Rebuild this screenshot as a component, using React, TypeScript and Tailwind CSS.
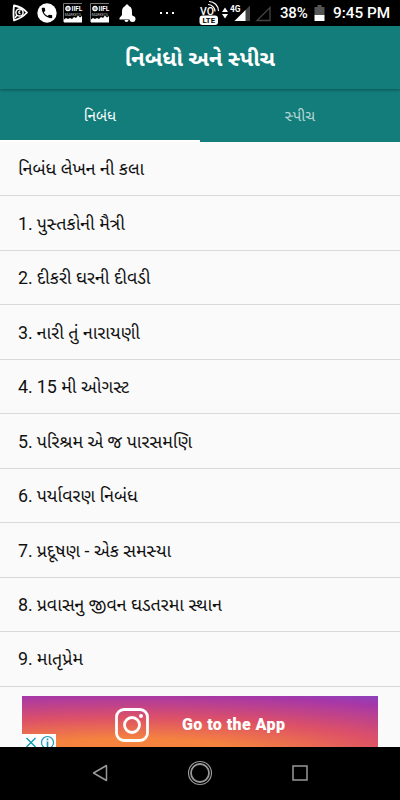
import { clsx } from 'clsx';

const tabs = ['નિબંધ', 'સ્પીચ'];

const essays = [
  { title: 'નિબંધ લેખન ની કલા' },
  { no: '1.', title: 'પુસ્તકોની મૈત્રી' },
  { no: '2.', title: 'દીકરી ઘરની દીવડી' },
  { no: '3.', title: 'નારી તું નારાયણી' },
  { no: '4.', title: '15 મી ઓગસ્ટ' },
  { no: '5.', title: 'પરિશ્રમ એ જ પારસમણિ' },
  { no: '6.', title: 'પર્યાવરણ નિબંધ' },
  { no: '7.', title: 'પ્રદૂષણ - એક સમસ્યા' },
  { no: '8.', title: 'પ્રવાસનુ જીવન ઘડતરમા સ્થાન' },
  { no: '9.', title: 'માતૃપ્રેમ' },
];

function MarketsIcon() {
  return (
    <svg viewBox="0 0 20 20" className="h-5 w-5 shrink-0 overflow-visible">
      <path d="M.5 19V.5h18.5" fill="none" stroke="#777" />
      <circle cx="5" cy="5.5" r="2.2" fill="#888" stroke="#fff" strokeWidth="1.2" />
      <text x="8.5" y="8" fontSize="6.5" fontWeight="700" fill="#fff">IIFL</text>
      <text x="1.8" y="12.8" fontSize="3.6" fill="#bbb">MARKETS</text>
      <path d="M1 19.5v-3l2-1.5 2 1 2-1 2 1 2-2 2 1 2-2.5 2 2 2-1.5v6.5z" fill="#fff" />
    </svg>
  );
}

function StatusBar() {
  return (
    <div className="flex h-[26px] shrink-0 items-center justify-between bg-black pr-[9px] pl-3 text-white">
      <div className="flex items-center">
        <svg viewBox="0 0 16 18" className="h-[18px] w-4">
          <path d="M2 1.5 Q1 9 2 16.5 Q10 14 15 8.5 Q10 3 2 1.5z" fill="none" stroke="#fff" strokeWidth="1.8" strokeLinejoin="round" />
          <circle cx="7.5" cy="8.5" r="3.6" fill="none" stroke="#fff" strokeWidth="1.5" />
          <path d="M8.5 7a1.3 1.3 0 1 0 0 2.5M5 11l-2 3" fill="none" stroke="#fff" strokeWidth="1.4" />
        </svg>
        <svg viewBox="0 0 20 20" className="ml-[9px] h-5 w-5">
          <circle cx="10" cy="10" r="9.7" fill="#fff" />
          <path transform="translate(3 3) scale(.58)" fill="#000" d="M6.6 10.8c1.4 2.8 3.8 5.1 6.6 6.6l2.2-2.2c.3-.3.7-.4 1-.2 1.1.4 2.3.6 3.6.6.6 0 1 .4 1 1V20c0 .6-.4 1-1 1C10.6 21 3 13.4 3 4c0-.6.4-1 1-1h3.5c.6 0 1 .4 1 1 0 1.2.2 2.4.6 3.6.1.4 0 .8-.3 1z" />
        </svg>
        <div className="ml-1.5 flex gap-[7px]">
          <MarketsIcon />
          <MarketsIcon />
        </div>
        <svg viewBox="0 0 17 19" className="ml-[9px] h-[19px] w-[17px]">
          <path d="M8 .5c1 0 1.7.7 1.7 1.6C12.5 3 13 5.5 13 8v3l3 3v1.5H.5V14L3 11V8c0-2.5.8-5 3.3-5.9C6.3 1.2 7 .5 8 .5z" fill="#fff" />
          <path d="M5.5 16h4a2 2 0 0 1-4 0z" fill="#fff" />
          <circle cx="13.5" cy="15" r="3" fill="#fff" />
        </svg>
        <div className="ml-6 flex gap-[4px]">
          <span className="size-[2px] bg-white" />
          <span className="size-[2px] bg-white" />
          <span className="size-[2px] bg-white" />
        </div>
      </div>

      <div className="flex items-center">
        <svg viewBox="0 0 73 26" className="h-[26px] w-[73px]">
          <text x="1" y="14.5" fontSize="10.5" fontWeight="500" fill="#fff" textLength="14">VO</text>
          <path d="M9 4.5a7 7 0 0 1 7 7M10 1.5a9.5 9.5 0 0 1 9.5 9.5" fill="none" stroke="#fff" strokeWidth="1.2" />
          <rect x=".5" y="15.5" width="18.5" height="9.5" rx="3" fill="#fff" />
          <text x="3.5" y="23.2" fontSize="8" fontWeight="700" fill="#000" textLength="12.5" lengthAdjust="spacingAndGlyphs">LTE</text>
          <path d="M23 12l3-4.5 3 4.5zM23 14h6l-3 4.5z" fill="#fff" />
          <path d="M51 5.5V21H35.5z" fill="#444" />
          <path d="M46.5 10v11H35.5z" fill="#fff" />
          <text x="31" y="12" fontSize="9.5" fontWeight="700" fill="#fff" textLength="10.5" lengthAdjust="spacingAndGlyphs">4G</text>
          <path d="M71 7.5v13H58z" fill="none" stroke="#444" strokeWidth="1.3" />
        </svg>
        <span className="ml-[8px] w-7 text-[15px] font-medium tracking-[-0.2px] whitespace-nowrap">38%</span>
        <svg viewBox="0 0 11 18" className="ml-[6px] h-[18px] w-[11px]">
          <path d="M3.5 1h4v2h3v8H.5V3h3z" fill="#555" />
          <path d="M.5 11h10v6H.5z" fill="#fff" />
        </svg>
        <span className="ml-[8px] w-[58px] text-[15.3px] font-medium whitespace-nowrap">9:45 PM</span>
      </div>
    </div>
  );
}

function AdBanner() {
  return (
    <div className="relative mx-[22px] mt-[9px] flex h-[51px] items-center overflow-hidden bg-[radial-gradient(ellipse_480px_70px_at_30%_120%,#f9883c_0%,#f5823f_27%,#dc5068_57%,#a637a8_90%,#8445c4_106%)]">
      <svg viewBox="0 0 34 34" className="ml-[93px] h-[34px] w-[34px] translate-y-[4px]" fill="none" stroke="#fff">
        <rect x="1.5" y="1.5" width="31" height="31" rx="7.5" strokeWidth="2.8" />
        <circle cx="17" cy="17" r="7.5" strokeWidth="2.8" />
        <circle cx="26" cy="8" r="2" fill="#fff" stroke="none" />
      </svg>
      <span className="mt-[7px] ml-[33px] text-[16px] font-black tracking-[0.42px] whitespace-nowrap text-white">Go to the App</span>
      <svg viewBox="0 0 34 13" className="absolute bottom-0 left-0 h-[13px] w-[34px]" fill="none" stroke="#1b9ab8">
        <rect width="34" height="13" fill="#fff" stroke="none" />
        <path d="M4.5 4l9 9M13.5 4l-9 9" strokeWidth="1.5" />
        <circle cx="25.5" cy="8.5" r="6" strokeWidth="1.2" />
        <path d="M25.5 7.5v5.5M25.5 4.5v1.7" strokeWidth="1.7" />
      </svg>
    </div>
  );
}

function NavBar() {
  return (
    <nav className="mt-auto flex h-[53px] shrink-0 items-center justify-between bg-black px-[91px] pb-[2px]">
      <svg viewBox="0 0 18 20" className="h-5 w-[18px]" fill="none" stroke="#999" strokeWidth="1.5">
        <path d="M15.5 2.5v15L2.5 10z" strokeLinejoin="round" />
      </svg>
      <svg viewBox="0 0 26 26" className="h-[26px] w-[26px]" fill="none" stroke="#999">
        <circle cx="13" cy="13" r="11.5" strokeWidth="1.2" />
        <circle cx="13" cy="13" r="9" strokeWidth="1.8" />
      </svg>
      <svg viewBox="0 0 18 18" className="h-[18px] w-[18px]" fill="none" stroke="#999" strokeWidth="1.5">
        <rect x="2" y="2" width="14" height="14" />
      </svg>
    </nav>
  );
}

export default function App() {
  return (
    <div className="flex h-[800px] w-[400px] flex-col overflow-hidden bg-[#fafafa] font-[Roboto,'Noto_Sans_Gujarati','Noto_Sans',sans-serif]">
      <StatusBar />

      <header className="z-10 flex h-[63px] shrink-0 items-center justify-center bg-[#127d7b] text-white shadow-[0_1px_3px_rgba(0,0,0,0.35)]">
        <h1 className="pt-px text-[22px] font-bold whitespace-nowrap">નિબંધો અને સ્પીચ</h1>
      </header>

      <div className="flex h-[53px] shrink-0 bg-[#127d7b]">
        {tabs.map((tab, i) => (
          <button
            key={tab}
            className={clsx(
              'flex flex-1 items-center justify-center border-b-2 pt-[3px] text-[15px]',
              i === 0 ? 'border-white text-white' : 'border-transparent text-white/70',
            )}
          >
            {tab}
          </button>
        ))}
      </div>

      <ul className="flex h-[544.5px] shrink-0 flex-col">
        {essays.map(essay => (
          <li
            key={essay.title}
            className="flex flex-1 items-center gap-[4px] border-b border-[#d9d9d9] pt-[2px] pl-[18px] text-[17.85px] whitespace-nowrap text-[#111]"
          >
            {essay.no && <span>{essay.no}</span>}
            <span>{essay.title}</span>
          </li>
        ))}
      </ul>

      <AdBanner />
      <NavBar />
    </div>
  );
}
